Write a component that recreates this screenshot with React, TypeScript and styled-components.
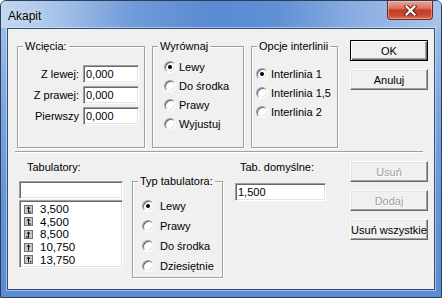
import styled, { createGlobalStyle } from "styled-components";

const GlobalStyle = createGlobalStyle`
    html, body {
        margin: 0;
        padding: 0;
        background: #ffffff;
    }
    body {
        font-family: "Liberation Sans", Arial, sans-serif;
        font-size: 11px;
        color: #000;
    }
`;

const Window = styled.div`
    width: 442px;
    height: 298px;
    box-sizing: border-box;
    display: flex;
    flex-direction: column;
    border: 1px solid #2d3f58;
    border-radius: 6px 6px 0 0;
    padding: 0 6px 7px;
    background: linear-gradient(to bottom, #a9c5eb 0%, #7ea7e0 35%, #6393d7 70%, #5b8bd3 100%);
    overflow: hidden;
`;

const TitleBar = styled.div`
    height: 27px;
    margin: 0 -6px;
    padding: 0 7px 0 7px;
    display: flex;
    align-items: flex-start;
    background: linear-gradient(90deg, #c3d7f0 0%, #a9c4ea 12%, #6f9bd9 30%, #5a8ad2 48%, #5f8fd4 62%, #8db0e3 82%, #a8c4ea 100%);
`;

const Title = styled.span`
    font-size: 12px;
    line-height: 14px;
    margin-top: 8px;
    color: #000;
    text-shadow: 0 0 6px rgba(255, 255, 255, 0.9);
`;

const CloseButton = styled.div`
    margin-left: auto;
    margin-right: 1px;
    width: 46px;
    height: 19px;
    box-sizing: border-box;
    border: 1px solid #6b2a20;
    border-top: none;
    border-radius: 0 0 4px 4px;
    background: linear-gradient(to bottom, #eaa598 0%, #d9735f 40%, #c23c27 52%, #c84a33 80%, #dc7458 100%);
    display: flex;
    align-items: center;
    justify-content: center;
    box-shadow: inset 0 0 0 1px rgba(255, 210, 200, 0.45);
`;

const Client = styled.div`
    flex: 1;
    background: #f0f0f0;
    border: 1px solid #35506f;
    box-shadow: 0 0 0 1px rgba(220, 235, 252, 0.55);
    padding: 11px 0 0 9px;
    display: flex;
    flex-direction: column;
`;

const Row = styled.div`
    display: flex;
    align-items: flex-start;
`;

const GroupBox = styled.fieldset<{ $w: number; $h: number; $ml?: number; $mt?: number; $pt: number; $pl?: number; $pr?: number }>`
    box-sizing: border-box;
    width: ${p => p.$w}px;
    height: ${p => p.$h}px;
    margin: ${p => p.$mt ?? 0}px 0 0 ${p => p.$ml ?? 0}px;
    padding: ${p => p.$pt}px ${p => p.$pr ?? 0}px 0 ${p => p.$pl ?? 0}px;
    min-width: 0;
    border: 1px solid #a0a0a0;
    box-shadow: 1px 1px 0 #ffffff, inset 1px 1px 0 #ffffff;
    display: flex;
    flex-direction: column;
`;

// the legend is shifted by the fieldset's left padding, so pull it back
const Legend = styled.legend<{ $shift?: number }>`
    margin-left: ${p => 5 - (p.$shift ?? 0)}px;
    padding: 0 2px;
    line-height: 13px;
    white-space: nowrap;
    background: #f0f0f0;
`;

const FieldRow = styled.div`
    display: flex;
    align-items: center;
    justify-content: flex-end;
    gap: 4px;
    height: 18px;
    margin-bottom: 3px;
`;

const TextBox = styled.input<{ $w: number }>`
    width: ${p => p.$w}px;
    height: 18px;
    box-sizing: border-box;
    margin: 0;
    padding: 0 2px;
    font: inherit;
    color: #000;
    background: #ffffff;
    border: 1px solid;
    border-color: #a0a0a0 #ffffff #ffffff #a0a0a0;
    box-shadow: inset 1px 1px 0 #696969, inset -1px -1px 0 #e3e3e3;
    outline: none;
`;

const RadioRow = styled.div<{ $h: number; $gap: number }>`
    display: flex;
    align-items: center;
    gap: ${p => p.$gap}px;
    height: ${p => p.$h}px;
    white-space: nowrap;
`;

const RadioDot = styled.span<{ $checked?: boolean }>`
    position: relative;
    flex: none;
    width: 12px;
    height: 12px;
    box-sizing: border-box;
    border-radius: 50%;
    border: 1px solid;
    border-color: #a0a0a0 #ffffff #ffffff #a0a0a0;
    box-shadow: inset 1px 1px 0 #696969, inset -1px -1px 0 #e3e3e3;
    background: #ffffff;

    &::after {
        content: "";
        display: ${p => (p.$checked ? "block" : "none")};
        position: absolute;
        left: 3px;
        top: 3px;
        width: 4px;
        height: 4px;
        border-radius: 50%;
        background: #000;
    }
`;

const ButtonColumn = styled.div<{ $ml: number; $mt?: number }>`
    display: flex;
    flex-direction: column;
    gap: 8px;
    width: 78px;
    margin-left: ${p => p.$ml}px;
    margin-top: ${p => p.$mt ?? 0}px;
`;

const Button = styled.div<{ $default?: boolean; $disabled?: boolean }>`
    height: 21px;
    box-sizing: border-box;
    display: flex;
    align-items: center;
    justify-content: center;
    background: #f0f0f0;
    white-space: nowrap;
    color: ${p => (p.$disabled ? "#a0a0a0" : "#000")};
    text-shadow: ${p => (p.$disabled ? "1px 1px 0 #ffffff" : "none")};
    border: 1px solid;
    border-color: ${p => (p.$default ? "#000 #000 #000 #000" : "#ffffff #696969 #696969 #ffffff")};
    box-shadow: ${p =>
        p.$default
            ? "inset 1px 1px 0 #ffffff, inset -1px -1px 0 #696969, inset -2px -2px 0 #a0a0a0"
            : "inset -1px -1px 0 #a0a0a0, inset 1px 1px 0 #e3e3e3"};
`;

const Separator = styled.div`
    height: 0;
    margin: 3px 11px 0 -2px;
    border-top: 1px solid #a0a0a0;
    border-bottom: 1px solid #ffffff;
`;

const Column = styled.div<{ $w: number; $ml: number }>`
    display: flex;
    flex-direction: column;
    width: ${p => p.$w}px;
    margin-left: ${p => p.$ml}px;
`;

const Caption = styled.div<{ $pl: number }>`
    margin-top: 8px;
    line-height: 13px;
    padding-left: ${p => p.$pl}px;
    white-space: nowrap;
`;

const Spaced = styled.div<{ $mt: number }>`
    margin-top: ${p => p.$mt}px;
    display: flex;
`;

const ListBox = styled.div`
    height: 68px;
    margin-top: 1px;
    box-sizing: border-box;
    background: #ffffff;
    border: 1px solid;
    border-color: #a0a0a0 #ffffff #ffffff #a0a0a0;
    box-shadow: inset 1px 1px 0 #696969, inset -1px -1px 0 #e3e3e3;
    padding: 2px 0 0 4px;
`;

const ListItem = styled.div`
    display: flex;
    align-items: center;
    gap: 7px;
    height: 12.6px;
    font-size: 11.5px;
`;

type TabKind = "left" | "right" | "center" | "decimal";

function TabIcon({ kind }: { kind: TabKind }) {
    return (
        <svg width="9" height="9" viewBox="0 0 9 9">
            <rect x="0.5" y="0.5" width="8" height="8" fill="#c8c8c8" stroke="#707070" />
            <path d="M4.5 1.5 L2.5 3.8 H6.5 Z" fill="#000" />
            <path d="M4.5 3 V7.5" stroke="#000" strokeWidth="1" />
            {kind === "left" && <path d="M4.5 7 H7" stroke="#000" strokeWidth="1" />}
            {kind === "right" && <path d="M2 7 H4.5" stroke="#000" strokeWidth="1" />}
            {kind === "decimal" && <rect x="6" y="6" width="1.2" height="1.2" fill="#000" />}
        </svg>
    );
}

const tabs: { value: string; kind: TabKind }[] = [
    { value: "3,500", kind: "left" },
    { value: "4,500", kind: "left" },
    { value: "8,500", kind: "right" },
    { value: "10,750", kind: "center" },
    { value: "13,750", kind: "decimal" },
];

type RadioProps = { label: string; checked?: boolean; h: number; gap: number };

function Radio({ label, checked, h, gap }: RadioProps) {
    return (
        <RadioRow $h={h} $gap={gap}>
            <RadioDot $checked={checked} />
            <span>{label}</span>
        </RadioRow>
    );
}

export default function App() {
    return (
        <>
            <GlobalStyle />
            <Window>
                <TitleBar>
                    <Title>Akapit</Title>
                    <CloseButton>
                        <svg width="13" height="11" viewBox="0 0 13 11">
                            <path d="M2.5 1.5 L10.5 9.5 M10.5 1.5 L2.5 9.5" stroke="#5a1a12" strokeWidth="4" strokeLinecap="square" />
                            <path d="M2.5 1.5 L10.5 9.5 M10.5 1.5 L2.5 9.5" stroke="#ffffff" strokeWidth="2.2" strokeLinecap="square" />
                        </svg>
                    </CloseButton>
                </TitleBar>
                <Client>
                    <Row>
                        <GroupBox $w={128} $h={108} $pt={12} $pr={5}>
                            <Legend>Wcięcia:</Legend>
                            <FieldRow>
                                <span>Z lewej:</span>
                                <TextBox $w={56} readOnly value="0,000" />
                            </FieldRow>
                            <FieldRow>
                                <span>Z prawej:</span>
                                <TextBox $w={56} readOnly value="0,000" />
                            </FieldRow>
                            <FieldRow>
                                <span>Pierwszy</span>
                                <TextBox $w={56} readOnly value="0,000" />
                            </FieldRow>
                        </GroupBox>
                        <GroupBox $w={92} $h={108} $ml={7} $pt={4} $pl={11}>
                            <Legend $shift={11}>Wyrównaj</Legend>
                            <Radio label="Lewy" checked h={19} gap={3} />
                            <Radio label="Do środka" h={19} gap={3} />
                            <Radio label="Prawy" h={19} gap={3} />
                            <Radio label="Wyjustuj" h={19} gap={3} />
                        </GroupBox>
                        <GroupBox $w={87} $h={108} $ml={7} $pt={11} $pl={4}>
                            <Legend $shift={4}>Opcje interlinii</Legend>
                            <Radio label="Interlinia 1" checked h={19} gap={3} />
                            <Radio label="Interlinia 1,5" h={19} gap={3} />
                            <Radio label="Interlinia 2" h={19} gap={3} />
                        </GroupBox>
                        <ButtonColumn $ml={12}>
                            <Button $default>OK</Button>
                            <Button>Anuluj</Button>
                        </ButtonColumn>
                    </Row>
                    <Separator />
                    <Row>
                        <Column $w={104} $ml={2}>
                            <Caption $pl={8}>Tabulatory:</Caption>
                            <Spaced $mt={7}>
                                <TextBox $w={104} readOnly value="" />
                            </Spaced>
                            <ListBox>
                                {tabs.map(t => (
                                    <ListItem key={t.value}>
                                        <TabIcon kind={t.kind} />
                                        <span>{t.value}</span>
                                    </ListItem>
                                ))}
                            </ListBox>
                        </Column>
                        <GroupBox $w={91} $h={103} $ml={9} $mt={22} $pt={8} $pl={9}>
                            <Legend $shift={9}>Typ tabulatora:</Legend>
                            <Radio label="Lewy" checked h={20} gap={6} />
                            <Radio label="Prawy" h={20} gap={6} />
                            <Radio label="Do środka" h={20} gap={6} />
                            <Radio label="Dziesiętnie" h={20} gap={6} />
                        </GroupBox>
                        <Column $w={91} $ml={12}>
                            <Caption $pl={5}>Tab. domyślne:</Caption>
                            <Spaced $mt={9}>
                                <TextBox $w={91} readOnly value="1,500" />
                            </Spaced>
                        </Column>
                        <ButtonColumn $ml={24} $mt={8}>
                            <Button $disabled>Usuń</Button>
                            <Button $disabled>Dodaj</Button>
                            <Button>Usuń wszystkie</Button>
                        </ButtonColumn>
                    </Row>
                </Client>
            </Window>
        </>
    );
}
